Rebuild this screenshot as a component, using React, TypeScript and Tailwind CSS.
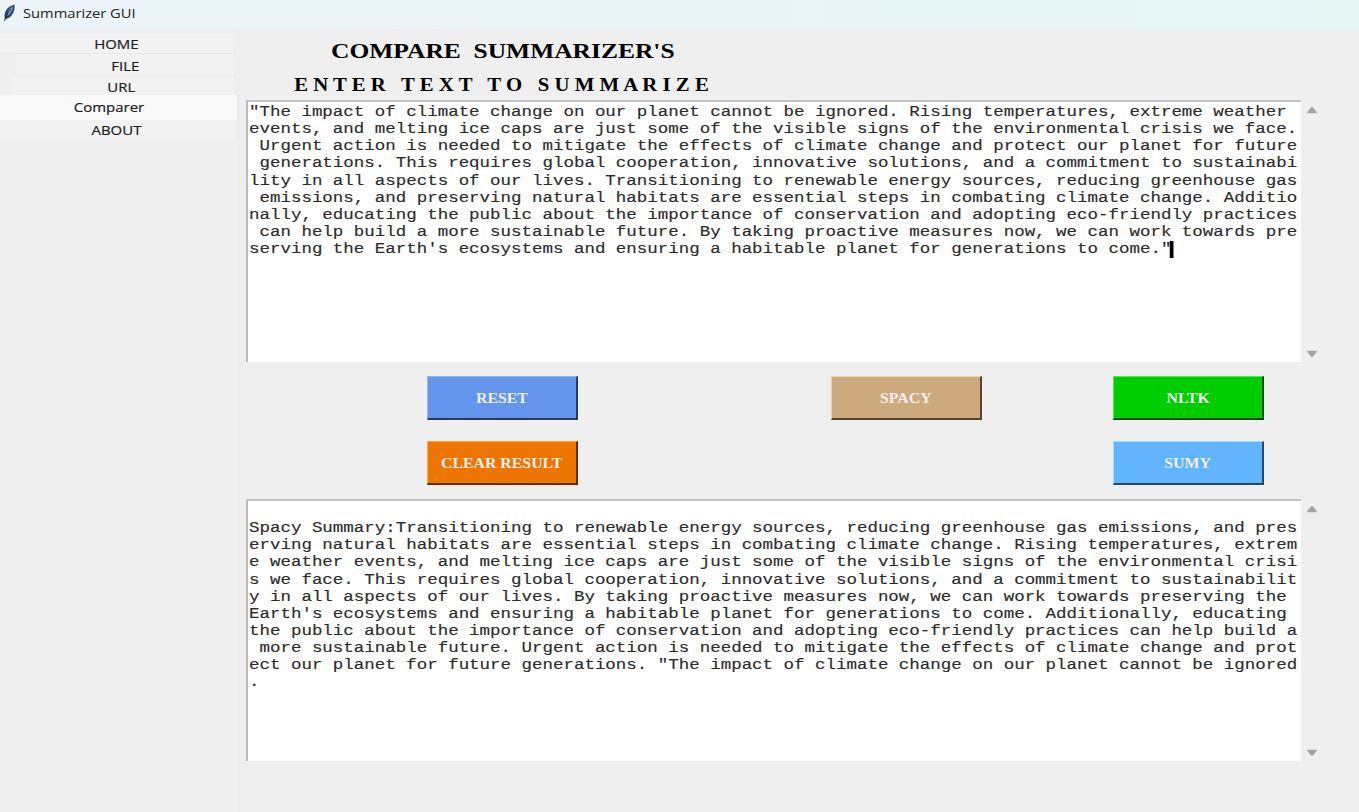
const INPUT_LINES = [
  '"The impact of climate change on our planet cannot be ignored. Rising temperatures, extreme weather ',
  'events, and melting ice caps are just some of the visible signs of the environmental crisis we face.',
  ' Urgent action is needed to mitigate the effects of climate change and protect our planet for future',
  ' generations. This requires global cooperation, innovative solutions, and a commitment to sustainabi',
  'lity in all aspects of our lives. Transitioning to renewable energy sources, reducing greenhouse gas',
  ' emissions, and preserving natural habitats are essential steps in combating climate change. Additio',
  'nally, educating the public about the importance of conservation and adopting eco-friendly practices',
  ' can help build a more sustainable future. By taking proactive measures now, we can work towards pre',
  'serving the Earth\'s ecosystems and ensuring a habitable planet for generations to come."',
];

const RESULT_LINES = [
  ' ',
  'Spacy Summary:Transitioning to renewable energy sources, reducing greenhouse gas emissions, and pres',
  'erving natural habitats are essential steps in combating climate change. Rising temperatures, extrem',
  'e weather events, and melting ice caps are just some of the visible signs of the environmental crisi',
  's we face. This requires global cooperation, innovative solutions, and a commitment to sustainabilit',
  'y in all aspects of our lives. By taking proactive measures now, we can work towards preserving the ',
  "Earth's ecosystems and ensuring a habitable planet for generations to come. Additionally, educating ",
  'the public about the importance of conservation and adopting eco-friendly practices can help build a',
  ' more sustainable future. Urgent action is needed to mitigate the effects of climate change and prot',
  'ect our planet for future generations. "The impact of climate change on our planet cannot be ignored',
  '.',
];

const TABS = [
  { label: 'HOME', row: 'mt-[2px] w-[235px] h-[21px] pt-[2px] pr-[95px] bg-[#f2f2f2] border-b border-r border-[#e9e9e9]' },
  { label: 'FILE', row: 'ml-[16px] w-[219px] h-[22px] pt-[2px] pr-[95px] bg-[#f2f2f2] border-b border-r border-[#e9e9e9]' },
  { label: 'URL', row: 'ml-[12px] w-[223px] h-[19px] pt-[3px] pr-[99px] bg-[#f2f2f2] border-r border-[#e9e9e9]' },
  { label: 'Comparer', row: 'w-[237px] h-[25px] pb-[2px] pr-[93px] bg-[#f9f9f9]' },
  { label: 'ABOUT', row: 'w-[235px] h-[20px] pr-[94px] bg-[#f2f2f2]' },
];

function Feather() {
  return (
    <svg width="14" height="18" viewBox="0 0 14 18" className="shrink-0">
      <path d="M3 15C1.500 10 3.500 3 12.500 0.500C13.500 7 9.500 14 4 15Z" fill="#2b4360" />
      <path d="M5.500 12C5 8 7 4 11 2.500C11 6 9 10 5.500 12Z" fill="#5f97d0" />
      <path d="M2.500 17C3.500 12 6 8 9 5" stroke="#1b2733" strokeWidth="0.9" fill="none" />
    </svg>
  );
}

function Arrow({ down = false }: { down?: boolean }) {
  return (
    <svg width="12" height="8" viewBox="0 0 12 8">
      <path
        d={down ? 'M1.500 0.800H10.500Q11.200 1.500 10.500 2.200L7 6.600Q6 7.500 5 6.600L1.500 2.200Q0.800 1.500 1.500 0.800Z' : 'M1.500 7.200H10.500Q11.200 6.500 10.500 5.800L7 1.400Q6 0.500 5 1.400L1.500 5.800Q0.800 6.500 1.500 7.200Z'}
        fill="#a3a3a3"
      />
    </svg>
  );
}

function TextPane({ lines, caret = false }: { lines: string[]; caret?: boolean }) {
  return (
    <div className="flex h-[262px]">
      <div className="h-full w-[1055px] shrink-0 overflow-hidden border-t-2 border-l-2 border-t-[#c2c2c2] border-l-[#bcbcbc] bg-white pt-[2px] pl-px">
        <div className="w-[840px] origin-top-left scale-x-[1.2476] font-['Liberation_Mono',monospace] text-[14px] leading-[17.150px] text-[#2c2c2c] [-webkit-text-stroke:0.15px_#2c2c2c]">
          {lines.map((line, i) => (
            <div key={i} className="flex h-[17.150px] whitespace-pre">
              {line}
              {caret && i === lines.length - 1 && <span className="-ml-px h-[17px] w-[2.500px] bg-black" />}
            </div>
          ))}
        </div>
      </div>
      <div className="flex w-[22px] flex-col items-center justify-between pt-[6px] pb-[4px]">
        <Arrow />
        <Arrow down />
      </div>
    </div>
  );
}

function Button({ label, tone }: { label: string; tone: string }) {
  return (
    <button
      className={`flex h-[44px] w-[151px] items-center justify-center border-t border-l border-r-2 border-b-2 pt-[2px] font-['Liberation_Serif',serif] text-[14px] font-bold whitespace-nowrap text-[#f0f0f0] ${tone}`}
    >
      <span className="inline-block scale-x-[1.130]">{label}</span>
    </button>
  );
}

export default function App() {
  return (
    <div className="flex h-[812px] w-[1359px] flex-col overflow-hidden bg-[#efefef]">
      <header className="flex h-[31px] shrink-0 items-start border-b border-[#e9ecee] bg-linear-to-r from-[#ebf4f9] via-[#e9f4f9] to-[#e6f6f5] pt-[4px] pl-[2px]">
        <Feather />
        <span className="ml-[7px] origin-left scale-x-[1.130] font-['Open_Sans',sans-serif] text-[13px] leading-[19px] text-[#222]">
          Summarizer GUI
        </span>
      </header>
      <div className="flex min-h-0 flex-1">
        <nav className="flex w-[239px] shrink-0 flex-col items-start border-r border-[#e9e9e9]">
          {TABS.map((tab) => (
            <div key={tab.label} className={`flex shrink-0 items-center justify-end ${tab.row}`}>
              <span className="origin-right scale-x-[1.150] font-['Open_Sans',sans-serif] text-[13px] leading-[18px] text-[#1c1c1c] [-webkit-text-stroke:0.2px_#1c1c1c]">
                {tab.label}
              </span>
            </div>
          ))}
        </nav>
        <main className="flex flex-1 flex-col pl-[7px]">
          <div className="flex h-[69px] w-[514px] shrink-0 flex-col items-center font-['Liberation_Serif',serif] font-bold text-black">
            <h1 className="mt-[7px] scale-x-[1.274] text-[20px] leading-[26px] whitespace-pre">COMPARE  SUMMARIZER'S</h1>
            <h2 className="mt-[8px] mr-[3px] scale-x-[1.155] text-[18px] leading-[26px] whitespace-pre">E N T E R   T E X T   T O   S U M M A R I Z E</h2>
          </div>
          <TextPane lines={INPUT_LINES} caret />
          <div className="grid h-[137px] shrink-0 grid-cols-[404px_282px_151px] grid-rows-[44px_44px] gap-y-[21px] pt-[14px] pl-[181px]">
            <Button label="RESET" tone="bg-[#6495ed] border-t-[#8fb6f5] border-l-[#8fb6f5] border-r-[#263b5f] border-b-[#263b5f]" />
            <Button label="SPACY" tone="bg-[#cdaa7d] border-t-[#f0d49e] border-l-[#f0d49e] border-r-[#524432] border-b-[#524432]" />
            <Button label="NLTK" tone="bg-[#00cd00] border-t-[#50ee50] border-l-[#50ee50] border-r-[#005200] border-b-[#005200]" />
            <Button label="CLEAR RESULT" tone="bg-[#ee7600] border-t-[#ffa54b] border-l-[#ffa54b] border-r-[#5f2f00] border-b-[#5f2f00]" />
            <span />
            <Button label="SUMY" tone="bg-[#63b4ff] border-t-[#8feaff] border-l-[#8feaff] border-r-[#284866] border-b-[#284866]" />
          </div>
          <TextPane lines={RESULT_LINES} />
        </main>
      </div>
    </div>
  );
}
